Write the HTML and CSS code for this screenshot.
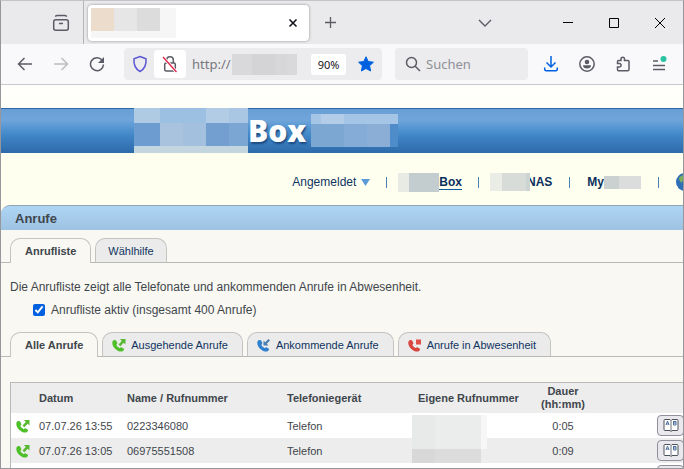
FILE: index.html
```html
<!DOCTYPE html>
<html lang="de">
<head>
  <meta charset="UTF-8" />
  <meta name="viewport" content="width=device-width, initial-scale=1.0"/>
  <title>Anrufe</title>
  <link rel="stylesheet" href="styles.css">
</head>
<body>

  <!-- shared icons -->
  <svg class="sprite" aria-hidden="true">
    <symbol id="handset" viewBox="0 0 14 14">
      <path d="M0.500 3.500C1 1.500 3.800 1.500 4.300 2.800l1 2.200c0.300 1-1 1.500-0.800 2C5 8.300 6.200 9.300 7.400 9.900c0.700 0.200 1.100-0.900 1.900-0.700l2.300 1.200c1 0.700 0.200 2.500-1.400 3C6.500 14.600-1 9 0.500 3.500z"/>
    </symbol>
    <symbol id="call-out" viewBox="0 0 14 14">
      <use href="#handset" fill="#4fbf2a"/>
      <path d="M8 1h5.500v5.500L11.700 4.800 8.300 8.200 6.500 6.400 9.800 2.900z" fill="#58b832"/>
    </symbol>
    <symbol id="call-in" viewBox="0 0 14 14">
      <use href="#handset" fill="#2f7fcf"/>
      <path d="M6.500 7.500v-5L8.200 4.200 11.400 1 13 2.600 9.800 5.800l1.700 1.700z" fill="#4a7fb0"/>
    </symbol>
    <symbol id="call-missed" viewBox="0 0 14 14">
      <use href="#handset" fill="#d9453f"/>
      <path d="M8 1.500h5v5H8z" fill="#e2504a"/>
    </symbol>
    <symbol id="book" viewBox="0 0 16 13">
      <path d="M1 1.500q0-1 1-1h5L8 1.500l1-1h5q1 0 1 1v9q0 1-1 1H9l-1 1-1-1H2q-1 0-1-1z" fill="#fff" stroke="#4c525c"/>
      <path d="M8 1.500v11" stroke="#6a7078"/>
      <path d="M3 6l1.500-4L6 6M3.500 5h2M10.500 2v4h2.500V2.500h-2.500M10.500 4H13" fill="none" stroke="#4a6f9c"/>
    </symbol>
  </svg>

  <div class="window">

    <header class="tabbar">
      <button class="icon-btn library" aria-label="Bibliothek">
        <svg width="18" height="18" fill="none" stroke="#5b5b66" stroke-width="1.500"><rect x="1.700" y="5.700" width="14.600" height="10.500" rx="2"/><path d="M3.500 2.800c0-1 0.600-1.300 1.500-1.300h8c0.900 0 1.500 0.300 1.500 1.300M7 9.500h4"/></svg>
      </button>
      <div class="browser-tab">
        <svg class="mosaic" width="85" height="30">
          <rect width="85" height="30" fill="#f6f6f6"/>
          <rect width="23" height="23" fill="#ecdccb"/>
          <rect x="23" width="23" height="23" fill="#e6e6e6"/>
          <rect x="46" width="23" height="23" fill="#dcdcdc"/>
        </svg>
        <button class="icon-btn" aria-label="Tab schließen">
          <svg width="10" height="10" stroke="#15141a" stroke-width="1.600"><path d="M1.500 1.500l7 7M8.500 1.500l-7 7"/></svg>
        </button>
      </div>
      <button class="icon-btn new-tab" aria-label="Neuer Tab">
        <svg width="13" height="13" stroke="#5b5b66" stroke-width="1.300"><path d="M6.500 1v11M1 6.500h11"/></svg>
      </button>
      <button class="icon-btn all-tabs" aria-label="Alle Tabs">
        <svg width="14" height="8" fill="none" stroke="#5b5b66" stroke-width="1.400"><path d="M1 1l6 6 6-6"/></svg>
      </button>
      <div class="window-controls">
        <button class="icon-btn" aria-label="Minimieren"><svg width="10" height="10" stroke="#000"><path d="M0 4.500h10"/></svg></button>
        <button class="icon-btn" aria-label="Maximieren"><svg width="10" height="10" fill="none" stroke="#000"><path d="M0.500 0.500h9v9h-9z"/></svg></button>
        <button class="icon-btn" aria-label="Schließen"><svg width="10" height="10" stroke="#000"><path d="M0 0l10 10M10 0L0 10"/></svg></button>
      </div>
    </header>

    <div class="toolbar">
      <div class="nav-buttons">
        <button class="icon-btn" aria-label="Zurück"><svg width="16" height="14" fill="none" stroke="#5b5b66" stroke-width="1.500"><path d="M15 7H1.500M7.500 1L1.500 7l6 6"/></svg></button>
        <button class="icon-btn" aria-label="Vor"><svg width="16" height="14" fill="none" stroke="#bdbdc2" stroke-width="1.500"><path d="M1 7h13.500M8.500 1l6 6-6 6"/></svg></button>
        <button class="icon-btn" aria-label="Neu laden"><svg width="16" height="16" fill="none" stroke="#5b5b66" stroke-width="1.500"><path d="M13 4A6.500 6.500 0 1 0 14.500 8.500"/><path d="M15 1v6H9z" fill="#5b5b66" stroke="none"/></svg></button>
      </div>
      <div class="urlbar">
        <button class="icon-btn" aria-label="Schutz"><svg width="16" height="18" fill="none" stroke="#5a54d6" stroke-width="1.500"><path d="M8 1.500l6 2.200c0.500 6-1 10-6 12.800C3 13.700 1.500 9.700 2 3.700z"/></svg></button>
        <button class="icon-btn lock" aria-label="Nicht sicher"><svg width="16" height="18" fill="none" stroke="#5b5b66" stroke-width="1.500"><rect x="2.700" y="8" width="10.600" height="8" rx="1.500"/><path d="M4.700 8V5a3.300 3.300 0 0 1 6.600 0v3"/><path d="M1 2l13.500 15" stroke="#fff" stroke-width="3"/><path d="M1 2l13.500 15" stroke="#e22850" stroke-width="1.400"/></svg></button>
        <span class="url">http://</span>
        <svg class="mosaic" width="65" height="21">
          <rect width="65" height="21" fill="#d9d9db"/>
          <rect x="20" width="23" height="21" fill="#d4d4d6"/>
          <rect x="43" width="12" height="21" fill="#d7d7d9"/>
        </svg>
        <button class="zoom">90%</button>
        <button class="icon-btn star" aria-label="Lesezeichen"><svg width="16" height="16"><path d="M8 0.800l2.200 4.700 5.200 0.700-3.800 3.600 1 5.200L8 12.500 3.400 15l1-5.200L0.600 6.200l5.200-0.700z" fill="#0061e0" stroke="#0061e0" stroke-linejoin="round"/></svg></button>
      </div>
      <label class="search">
        <svg width="16" height="16" fill="none" stroke="#5b5b66" stroke-width="1.500"><circle cx="6.500" cy="6.500" r="5"/><path d="M10.200 10.200L15 15"/></svg>
        <input type="text" placeholder="Suchen" aria-label="Suchen">
      </label>
      <div class="tools">
        <button class="icon-btn" aria-label="Downloads"><svg width="16" height="16" fill="none" stroke="#0061e0" stroke-width="1.500"><path d="M8 0v10.500M3.500 6.500L8 11l4.500-4.500M1.700 11.500v1.800c0 1 0.500 1.500 1.500 1.500h9.600c1 0 1.500-0.500 1.500-1.500v-1.800"/></svg></button>
        <button class="icon-btn" aria-label="Konto"><svg width="16" height="16" fill="#5b5b66"><circle cx="8" cy="8" r="7.200" fill="none" stroke="#5b5b66" stroke-width="1.500"/><circle cx="8" cy="6" r="2.300"/><path d="M4 9.300h8c0 2.300-1.500 3.300-4 3.300s-4-1-4-3.300z"/></svg></button>
        <button class="icon-btn" aria-label="Erweiterungen"><svg width="16" height="16" fill="none" stroke="#5b5b66" stroke-width="1.500"><path d="M2.500 5.700c0-1 0.300-1.200 1-1.200H6V3a1.700 1.700 0 0 1 3.500 0v1.500h3.300c0.700 0 1.200 0.300 1.200 1.200v7.800c0 0.900-0.500 1.300-1.200 1.300H3.500c-0.700 0-1-0.400-1-1.300V11h1.800a1.800 1.800 0 0 0 0-3.600H2.500z"/></svg></button>
        <button class="icon-btn" aria-label="Menü"><svg width="16" height="16" stroke="#5b5b66" stroke-width="1.400"><path d="M2 5h5M2 9.500h12M2 13.500h12"/><circle cx="12.500" cy="3" r="3" fill="#2ac3a2" stroke="none"/></svg></button>
      </div>
    </div>

    <div class="page">
      <div class="banner">
        <svg class="mosaic" width="114" height="45">
          <rect width="114" height="45" fill="#c3d5de"/>
          <rect width="114" height="15" fill="#9cc0e1"/>
          <rect width="26" height="15" fill="#aecbe3"/>
          <rect x="72" width="23" height="15" fill="#b2cce5"/>
          <rect x="95" width="19" height="15" fill="#a9c7e3"/>
          <rect y="15" width="26" height="23" fill="#6d9dd0"/>
          <rect x="26" y="15" width="23" height="23" fill="#a9c3df"/>
          <rect x="49" y="15" width="23" height="23" fill="#a3c0df"/>
          <rect x="72" y="15" width="23" height="23" fill="#739fd0"/>
          <rect x="95" y="15" width="19" height="23" fill="#7ba5d2"/>
        </svg>
        <span class="logo">Box</span>
        <svg class="mosaic" width="87" height="33">
          <rect width="87" height="33" fill="#85acd6"/>
          <rect width="87" height="10" fill="#a5c5e6"/>
          <rect x="10" width="23" height="10" fill="#b3cde9"/>
          <rect y="10" width="33" height="23" fill="#7da7d3"/>
          <rect x="56" y="10" width="23" height="23" fill="#8aaed5"/>
          <rect x="79" y="10" width="8" height="23" fill="#4f8cca"/>
        </svg>
      </div>

      <nav class="topnav">
        <a href="#">Angemeldet <svg class="arrow" width="9" height="7"><path d="M0 0h9L4.500 7z" fill="#5b9bd9"/></svg></a>
        <a href="#" class="strong current"><svg class="mosaic" width="41" height="19"><rect width="41" height="19" fill="#c3cdcf"/><rect width="11" height="19" fill="#e8ebe4"/></svg><span>Box</span></a>
        <a href="#" class="strong nas"><svg class="mosaic" width="40" height="18"><rect width="40" height="18" fill="#ccd3d3"/><rect width="12" height="18" fill="#eaece6"/><rect x="12" width="24" height="18" fill="#d8dcd9"/></svg><span>NAS</span></a>
        <a href="#" class="strong wide"><span>My</span><svg class="mosaic" width="37" height="13"><rect width="37" height="13" fill="#dadddb"/><rect width="15" height="13" fill="#cbd1d1"/></svg></a>
        <a href="#" class="wide" aria-label="Sprache"><svg width="18" height="18"><circle cx="9" cy="9" r="9" fill="#2e6fb5"/><path d="M3 5c3-4 6-3 7-1S6 7 6 9s-3-1-3-4z" fill="#7fae5c"/></svg></a>
      </nav>

      <main class="panel">
        <h1>Anrufe</h1>

        <div class="tabs">
          <a href="#" class="active">Anrufliste</a>
          <a href="#">Wählhilfe</a>
        </div>

        <div class="intro">
          <p>Die Anrufliste zeigt alle Telefonate und ankommenden Anrufe in Abwesenheit.</p>
          <label><input type="checkbox" checked> Anrufliste aktiv (insgesamt 400 Anrufe)</label>
        </div>

        <div class="tabs filter">
          <a href="#" class="active">Alle Anrufe</a>
          <a href="#"><svg width="14" height="14"><use href="#call-out"/></svg>Ausgehende Anrufe</a>
          <a href="#"><svg width="14" height="14"><use href="#call-in"/></svg>Ankommende Anrufe</a>
          <a href="#"><svg width="14" height="14"><use href="#call-missed"/></svg>Anrufe in Abwesenheit</a>
        </div>

        <table class="calls">
          <colgroup>
            <col class="c-icon"><col class="c-date"><col class="c-name"><col class="c-device"><col class="c-own"><col class="c-time"><col>
          </colgroup>
          <thead>
            <tr>
              <th></th>
              <th>Datum</th>
              <th>Name / Rufnummer</th>
              <th>Telefoniegerät</th>
              <th class="own">Eigene Rufnummer</th>
              <th class="time">Dauer (hh:mm)</th>
              <th></th>
            </tr>
          </thead>
          <tbody>
            <tr>
              <td class="icon"><svg width="14" height="14"><use href="#call-out"/></svg></td>
              <td>07.07.26 13:55</td>
              <td>0223346080</td>
              <td>Telefon</td>
              <td class="masked"><svg class="mosaic" width="75" height="23"><rect width="75" height="23" fill="#ebecec"/><rect x="69" width="6" height="23" fill="#f7f7f7"/><rect width="23" height="23" fill="#e8eaea"/></svg></td>
              <td class="time">0:05</td>
              <td class="action"><button aria-label="Ins Telefonbuch"><svg width="16" height="13"><use href="#book"/></svg></button></td>
            </tr>
            <tr>
              <td class="icon"><svg width="14" height="14"><use href="#call-out"/></svg></td>
              <td>07.07.26 13:05</td>
              <td>06975551508</td>
              <td>Telefon</td>
              <td class="masked"><svg class="mosaic" width="75" height="25"><rect width="75" height="11" fill="#ebecec"/><rect x="69" width="6" height="11" fill="#f7f7f7"/><rect width="23" height="11" fill="#e8eaea"/><rect y="11" width="69" height="14" fill="#dcdcdc"/><rect y="11" width="23" height="14" fill="#d8d8d8"/></svg></td>
              <td class="time">0:09</td>
              <td class="action"><button aria-label="Ins Telefonbuch"><svg width="16" height="13"><use href="#book"/></svg></button></td>
            </tr>
            <tr>
              <td></td>
              <td></td>
              <td></td>
              <td></td>
              <td></td>
              <td></td>
              <td class="action"><button aria-label="Ins Telefonbuch"><svg width="16" height="13"><use href="#book"/></svg></button></td>
            </tr>
          </tbody>
        </table>
      </main>
    </div>
  </div>

</body>
</html>
```
FILE: styles.css
```css
* {
  box-sizing: border-box;
}

body {
  margin: 0;
  font-family: "Liberation Sans", Arial, sans-serif;
  font-size: 12px;
  line-height: 14px;
  color: #3f464c;
}

svg {
  display: block;
  flex: none;
}

a {
  color: #0f3460;
  text-decoration: none;
}

.sprite {
  position: absolute;
  width: 0;
  height: 0;
}

.window {
  display: flex;
  flex-direction: column;
  height: 100vh;
  overflow: hidden;
  border: 1px solid #97979b;
  border-top-color: #c4c4c7;
}

.icon-btn {
  display: flex;
  align-items: center;
  justify-content: center;
  flex: none;
  padding: 0;
  border: none;
  background: none;
}

/* browser chrome */
.tabbar {
  display: flex;
  align-items: center;
  flex: none;
  height: 43px;
  background: #eaeaec;
}

.library {
  width: 83px;
  height: 43px;
  padding-left: 37px;
  border-right: 1px solid #b4b4b8;
}

.browser-tab {
  display: flex;
  align-items: center;
  justify-content: space-between;
  width: 221px;
  height: 36px;
  margin-left: 4px;
  padding: 0 11px 0 3px;
  background: #fff;
  border-radius: 4px;
  box-shadow: 0 0 3px rgba(0, 0, 0, 0.4);
}

.new-tab {
  margin-left: 15px;
}

.all-tabs {
  margin-left: auto;
}

.window-controls {
  display: flex;
  gap: 36px;
  margin: 0 18px 0 71px;
}

.toolbar {
  display: flex;
  align-items: center;
  flex: none;
  height: 41px;
  background: #f9f9fb;
  border-bottom: 1px solid #c9c9cd;
  font-family: "Noto Sans", sans-serif;
}

.nav-buttons {
  display: flex;
  gap: 20px;
  padding: 0 19px 0 16px;
}

.urlbar,
.search {
  display: flex;
  align-items: center;
  height: 32px;
  background: #ececee;
  border-radius: 4px;
}

.urlbar {
  flex: 1;
  padding: 0 8px;
}

.lock {
  width: 32px;
  height: 28px;
  margin: 0 6px;
  background: #fff;
  border-radius: 4px;
}

.url {
  width: 40px;
  font-size: 13px;
  color: #77777d;
}

.zoom {
  width: 35px;
  height: 21px;
  margin-left: 14px;
  padding: 0;
  border: none;
  border-radius: 3px;
  background: #fff;
  font: 11px "Noto Sans", sans-serif;
  color: #15141a;
}

.star {
  margin-left: auto;
}

.search {
  width: 133px;
  margin-left: 13px;
  padding: 0 10px;
  gap: 3px;
}

.search input {
  width: 80px;
  border: none;
  background: none;
  font: 13px "Noto Sans", sans-serif;
}

.search input::placeholder {
  color: #909096;
}

.tools {
  display: flex;
  gap: 20px;
  padding: 0 16px 0 15px;
}

/* router page */
.page {
  flex: 1;
  min-height: 0;
  padding-top: 23px;
  background: linear-gradient(#fffffc, #fffff0 70px);
}

.banner {
  display: flex;
  align-items: center;
  height: 45px;
  padding-left: 133px;
  background: linear-gradient(#2f6aa8 1px, #6a9fd5 1px, #6fa5da 12px, #5496d2 20px, #4085c6 28px, #2d6aaa);
}

.logo {
  width: 63px;
  font: 800 30px/40px "Open Sans", sans-serif;
  color: #fff;
  text-shadow: 1px 2px 2px #1b4a80;
}

.topnav {
  display: flex;
  align-items: center;
  justify-content: flex-end;
  height: 52px;
  margin-right: -11px;
  padding-top: 6px;
}

.topnav a {
  display: flex;
  align-items: center;
  height: 19px;
}

.topnav a + a::before {
  content: "";
  width: 1px;
  height: 11px;
  margin: 0 11px 0 16px;
  background: #4a80b4;
}

.topnav .wide::before {
  margin: 0 17px;
}

.topnav .arrow {
  margin-left: 5px;
}

.topnav .mosaic {
  position: relative;
}

.topnav .strong {
  font-weight: bold;
  color: #0b2f5c;
}

/* the label starts underneath the mosaic */
.topnav .nas span {
  margin-left: -3px;
}

.topnav .current span {
  border-bottom: 1px solid #0b5c9c;
}

.panel h1 {
  margin: 0;
  height: 25px;
  padding-left: 14px;
  border-top: 1px solid #8fa3b4;
  border-top-left-radius: 9px;
  background: linear-gradient(#afd5f5, #9dc2e2);
  font-size: 13px;
  line-height: 25px;
}

.panel {
  height: 100%;
  border-top-left-radius: 9px;
  background: #f9f8f3;
}

.tabs {
  display: flex;
  gap: 4px;
  padding: 8px 9px 0;
  border-bottom: 1px solid #b9b9b7;
}

.tabs a {
  display: flex;
  align-items: center;
  height: 24px;
  padding: 0 12px;
  border: 1px solid #c3c3c1;
  border-bottom: none;
  border-radius: 10px 10px 0 0;
  background: #ebebeb;
  font-size: 11px;
}

.filter a {
  padding: 0 14px;
}

.tabs .active {
  height: 25px;
  margin-bottom: -1px;
  padding: 0 14px;
  background: #f9f8f3;
  font-weight: bold;
  color: #3f464c;
}

.tabs svg {
  margin: 0 5px 0 -5px;
}

.intro {
  padding: 17px 9px 7px;
}

.intro p {
  margin: 0 0 9px;
}

.intro label {
  display: flex;
  align-items: center;
  gap: 6px;
  padding-left: 23px;
}

.intro input {
  width: 12px;
  height: 12px;
  margin: 0;
  accent-color: #0061e0;
}

/* wider than the viewport, the last column is cut off */
.calls {
  width: calc(100% + 20px);
  margin: 25px 0 0 9px;
  border-collapse: separate;
  border-spacing: 0;
  table-layout: fixed;
  border: 1px solid #b9b9b7;
  background: #fff;
  font-size: 11px;
}

.c-icon { width: 28px; }
.c-date { width: 88px; }
.c-name { width: 160px; }
.c-device { width: 125px; }
.c-own { width: 115px; }
.c-time { width: 72px; }

.calls th,
.calls td {
  height: 25px;
  padding: 0;
  text-align: left;
}

.calls th {
  height: 30px;
  line-height: 13px;
  background: #ededed;
}

.calls tr:nth-child(even) td {
  background: #ededed;
}

.calls .icon {
  padding-left: 5px;
}

.calls .own {
  padding-left: 6px;
}

.calls .time {
  text-align: center;
}

.calls .masked {
  vertical-align: bottom;
}

.calls .action {
  padding-left: 58px;
}

.action button {
  display: block;
  width: 27px;
  height: 21px;
  padding: 0 5px;
  border: 1px solid #8f8f9d;
  border-radius: 4px;
  background: #e9e9ed;
}
```
